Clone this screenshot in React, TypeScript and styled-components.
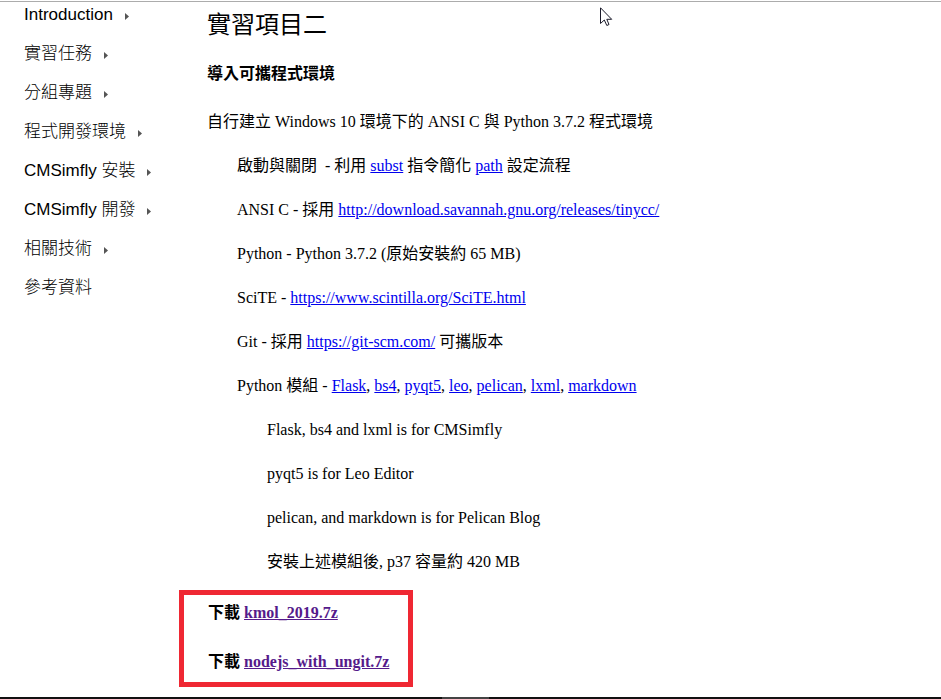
import React from "react";
import styled, { createGlobalStyle } from "styled-components";

const Global = createGlobalStyle`
  html, body { margin: 0; background: #fff; }
  *, *::before, *::after { box-sizing: border-box; }
`;
const Page = styled.div`
  position: relative;
  display: flex;
  flex-direction: column;
  min-height: 100vh;
  padding-top: 1px;
  color: #000;
`;
const Columns = styled.div`
  flex: 1;
  display: flex;
  border-top: 1px solid #acacac;
`;
const Sidebar = styled.nav`
  flex: 0 0 179px;
  padding-left: 24px;
  font: 300 17px/20px "Liberation Sans", "Noto Sans CJK TC", sans-serif;
`;
const Menu = styled.ul`
  list-style: none;
  margin: 0;
  padding: 3px 0 0;
  display: grid;
  gap: 19px;
`;
const MenuLink = styled.a`
  display: flex;
  align-items: center;
  height: 20px;
  gap: 12px;
  color: #000;
  text-decoration: none;
  white-space: nowrap;
`;
const Arrow = styled.svg`
  width: 4px;
  height: 7px;
  margin-top: 3px;
  fill: #555;
`;
const Main = styled.main`
  flex: 1;
  min-width: 0;
  font: 400 16px/20px "Liberation Serif", "Noto Sans CJK TC", serif;
`;
const Article = styled.div`
  padding-left: 28px;
`;
const Title = styled.h1`
  margin: 0;
  padding-top: 5px;
  font-size: 24px;
  line-height: 36px;
  font-weight: 400;
`;
const Subtitle = styled.h2`
  margin: 21px 0 28px;
  font-size: 16px;
  line-height: 20px;
`;
const Line = styled.p<{ $level?: number }>`
  margin: 0 0 24px;
  padding-left: ${(p) => (p.$level ?? 0) * 30}px;
`;
const Link = styled.a<{ $visited?: boolean }>`
  color: ${(p) => (p.$visited ? "#551a8b" : "#0000ee")};
`;
const Downloads = styled.section`
  width: fit-content;
  margin-top: -6px;
  padding: 8px 19px 10px 24px;
  border: 5px solid #ef2833;
  display: grid;
  gap: 29px;
  font-weight: 700;
`;
const DownloadLine = styled.p`
  margin: 0;
`;
const BottomEdge = styled.footer`
  display: flex;
  justify-content: center;
  height: 2px;
  background: #111;
`;
const EdgeSegment = styled.div`
  flex: 0 0 5%;
  margin-left: -1%;
  background: #444;
`;
const Pointer = styled.svg`
  position: absolute;
  left: 600px;
  top: 7px;
  width: 13px;
  height: 20px;
`;

const menu = [
  ["Introduction", true],
  ["實習任務", true],
  ["分組專題", true],
  ["程式開發環境", true],
  ["CMSimfly 安裝", true],
  ["CMSimfly 開發", true],
  ["相關技術", true],
  ["參考資料", false],
] as const;
const modules = ["Flask", "bs4", "pyqt5", "leo", "pelican", "lxml", "markdown"];

export default function App() {
  return (
    <Page>
      <Global />
      <Columns>
        <Sidebar>
          <Menu>
            {menu.map(([label, more]) => (
              <li key={label}>
                <MenuLink href="#">
                  {label}
                  {more && <Arrow viewBox="0 0 4 7"><path d="M0 0L4 3.5L0 7Z" /></Arrow>}
                </MenuLink>
              </li>
            ))}
          </Menu>
        </Sidebar>
        <Main>
          <Article>
            <Title>實習項目二</Title>
            <Subtitle>導入可攜程式環境</Subtitle>
            <Line>自行建立 Windows 10 環境下的 ANSI C 與 Python 3.7.2 程式環境</Line>
            <Line $level={1}>啟動與關閉&nbsp; - 利用 <Link href="#">subst</Link> 指令簡化 <Link href="#">path</Link> 設定流程</Line>
            <Line $level={1}>ANSI C - 採用 <Link href="#">http://download.savannah.gnu.org/releases/tinycc/</Link></Line>
            <Line $level={1}>Python - Python 3.7.2 (原始安裝約 65 MB)</Line>
            <Line $level={1}>SciTE - <Link href="#">https://www.scintilla.org/SciTE.html</Link></Line>
            <Line $level={1}>Git - 採用 <Link href="#">https://git-scm.com/</Link> 可攜版本</Line>
            <Line $level={1}>
              Python 模組 -{" "}
              {modules.map((name, i) => (
                <React.Fragment key={name}>{i > 0 && ", "}<Link href="#">{name}</Link></React.Fragment>
              ))}
            </Line>
            <Line $level={2}>Flask, bs4 and lxml is for CMSimfly</Line>
            <Line $level={2}>pyqt5 is for Leo Editor</Line>
            <Line $level={2}>pelican, and markdown is for Pelican Blog</Line>
            <Line $level={2}>安裝上述模組後, p37 容量約 420 MB</Line>
          </Article>
          <Downloads>
            <DownloadLine>下載 <Link $visited href="#">kmol_2019.7z</Link></DownloadLine>
            <DownloadLine>下載 <Link $visited href="#">nodejs_with_ungit.7z</Link></DownloadLine>
          </Downloads>
        </Main>
      </Columns>
      <BottomEdge><EdgeSegment /></BottomEdge>
      <Pointer viewBox="0 0 13 20" aria-hidden="true">
        <path d="M0.5 0.8V16.5L4.3 13L6.8 18.5L9 17.5L6.8 12.3H11.7Z" fill="#fff" stroke="#1a1a2a" />
      </Pointer>
    </Page>
  );
}
